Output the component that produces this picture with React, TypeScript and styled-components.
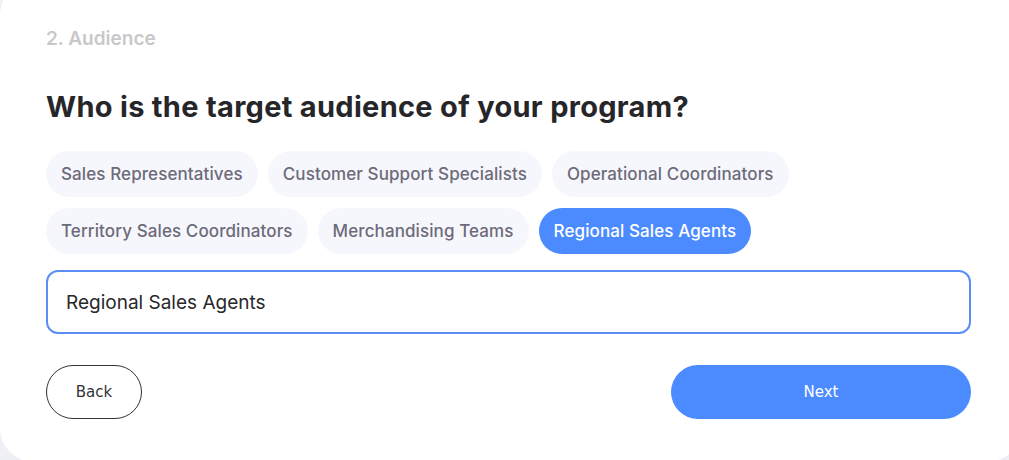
import React, { useState } from "react";
import styled, { createGlobalStyle } from "styled-components";

const GlobalStyle = createGlobalStyle`
  html, body {
    margin: 0;
    padding: 0;
    background: #eff0f5;
    overflow: hidden;
  }
  body {
    font-family: Inter, "Open Sans", sans-serif;
  }
`;

const options = [
  "Sales Representatives",
  "Customer Support Specialists",
  "Operational Coordinators",
  "Territory Sales Coordinators",
  "Merchandising Teams",
  "Regional Sales Agents",
];

const App = () => {
  const [selected, setSelected] = useState("Regional Sales Agents");
  const [value, setValue] = useState("Regional Sales Agents");

  const pick = (opt: string) => {
    setSelected(opt);
    setValue(opt);
  };

  return (
    <>
      <GlobalStyle />
      <Card>
        <Step>2. Audience</Step>
        <Title>Who is the target audience of your program?</Title>
        <Chips>
          {options.map((opt) => (
            <Chip
              key={opt}
              $active={opt === selected}
              onClick={() => pick(opt)}
            >
              {opt}
            </Chip>
          ))}
        </Chips>
        <Input value={value} onChange={(e) => setValue(e.target.value)} />
        <Footer>
          <BackButton>Back</BackButton>
          <NextButton>Next</NextButton>
        </Footer>
      </Card>
    </>
  );
};

export default App;

const Card = styled.section`
  width: 1021px;
  height: 481px;
  margin-top: -19px;
  box-sizing: border-box;
  padding: 45px 50px 0 46px;
  background: #ffffff;
  border-radius: 34px;
  display: flex;
  flex-direction: column;
`;

const Step = styled.div`
  font-size: 19px;
  font-weight: 600;
  color: #c8c8cb;
  line-height: 24px;
  margin-top: 1px;
`;

const Title = styled.h1`
  margin: 38px 0 0;
  font-size: 29px;
  font-weight: 700;
  color: #26262a;
  line-height: 36px;
  letter-spacing: 0.3px;
`;

const Chips = styled.div`
  display: flex;
  flex-wrap: wrap;
  gap: 11px 10px;
  margin-top: 26px;
  max-width: 800px;
`;

const Chip = styled.button<{ $active?: boolean }>`
  height: 46px;
  padding: 0 15px;
  border: none;
  border-radius: 23px;
  font-family: inherit;
  font-size: 17px;
  font-weight: 500;
  letter-spacing: 0.1px;
  cursor: pointer;
  background: ${(p) => (p.$active ? "#4b8bff" : "#f6f7fc")};
  color: ${(p) => (p.$active ? "#ffffff" : "#6d6a7a")};
`;

const Input = styled.input`
  margin-top: 16px;
  height: 64px;
  box-sizing: border-box;
  border: 2px solid #5a8ff5;
  border-radius: 12px;
  padding: 0 18px;
  font-family: inherit;
  font-size: 19px;
  font-weight: 400;
  color: #28282c;
  outline: none;
`;

const Footer = styled.div`
  display: flex;
  justify-content: space-between;
  align-items: center;
  margin-top: 31px;
`;

const BackButton = styled.button`
  width: 96px;
  height: 54px;
  border: 1.5px solid #333336;
  border-radius: 27px;
  background: #ffffff;
  font-family: "DejaVu Sans", sans-serif;
  font-size: 15px;
  color: #333336;
  cursor: pointer;
`;

const NextButton = styled.button`
  width: 300px;
  height: 54px;
  border: none;
  border-radius: 27px;
  background: #4b8bff;
  font-family: "DejaVu Sans", sans-serif;
  font-size: 15px;
  color: #ffffff;
  cursor: pointer;
`;
